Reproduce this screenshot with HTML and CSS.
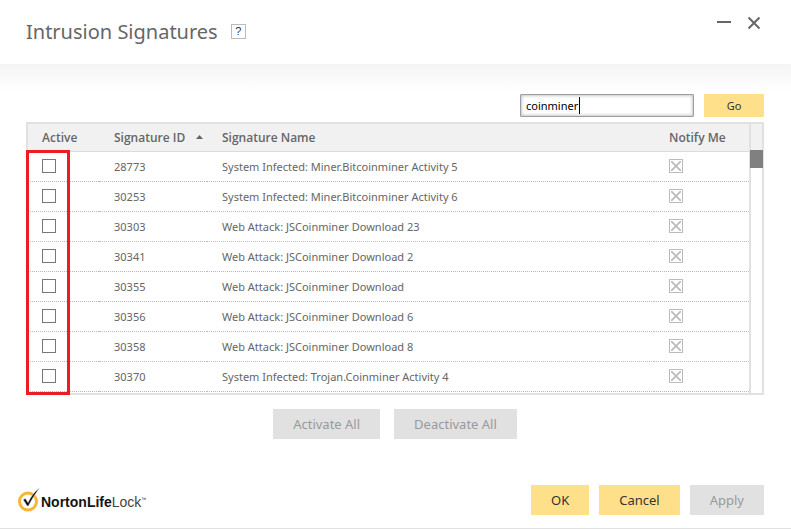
FILE: index.html
```html
<!DOCTYPE html>
<html lang="en">
<head>
<meta charset="utf-8">
<title>Intrusion Signatures</title>
<link rel="stylesheet" href="styles.css">
</head>
<body>
<header class="titlebar">
  <h1 class="title">Intrusion Signatures</h1>
  <button class="help" type="button" aria-label="Help">?</button>
  <div class="window-buttons">
    <button class="window-button" type="button" aria-label="Minimize">
      <svg width="14" height="14" viewBox="0 0 14 14"><path d="M0 6h14" stroke="#666" stroke-width="2"/></svg>
    </button>
    <button class="window-button" type="button" aria-label="Close">
      <svg width="14" height="14" viewBox="0 0 14 14"><path d="M1.5 1.5l11 11M12.500 1.500l-11 11" stroke="#666" stroke-width="2"/></svg>
    </button>
  </div>
</header>
<main class="content">
  <form class="search">
    <div class="search-box">
      <input class="search-input" type="text" value="coinminer" aria-label="Search signatures">
      <span class="caret"></span>
    </div>
    <button class="button button-go" type="button">Go</button>
  </form>
  <div class="list">
    <table class="signatures">
      <colgroup><col class="col-active"><col class="col-id"><col><col class="col-notify"></colgroup>
      <thead>
        <tr><th>Active</th><th>Signature ID<svg class="sort" width="7" height="4" viewBox="0 0 7 4"><path d="M0 4L3.500 0L7 4z" fill="#666"/></svg></th><th>Signature Name</th><th>Notify Me</th></tr>
      </thead>
      <tbody>
        <tr><td><input class="check" type="checkbox" aria-label="Activate 28773"></td><td>28773</td><td>System Infected: Miner.Bitcoinminer Activity 5</td><td><input class="check notify" type="checkbox" checked disabled aria-label="Notify 28773"></td></tr>
        <tr><td><input class="check" type="checkbox" aria-label="Activate 30253"></td><td>30253</td><td>System Infected: Miner.Bitcoinminer Activity 6</td><td><input class="check notify" type="checkbox" checked disabled aria-label="Notify 30253"></td></tr>
        <tr><td><input class="check" type="checkbox" aria-label="Activate 30303"></td><td>30303</td><td>Web Attack: JSCoinminer Download 23</td><td><input class="check notify" type="checkbox" checked disabled aria-label="Notify 30303"></td></tr>
        <tr><td><input class="check" type="checkbox" aria-label="Activate 30341"></td><td>30341</td><td>Web Attack: JSCoinminer Download 2</td><td><input class="check notify" type="checkbox" checked disabled aria-label="Notify 30341"></td></tr>
        <tr><td><input class="check" type="checkbox" aria-label="Activate 30355"></td><td>30355</td><td>Web Attack: JSCoinminer Download</td><td><input class="check notify" type="checkbox" checked disabled aria-label="Notify 30355"></td></tr>
        <tr><td><input class="check" type="checkbox" aria-label="Activate 30356"></td><td>30356</td><td>Web Attack: JSCoinminer Download 6</td><td><input class="check notify" type="checkbox" checked disabled aria-label="Notify 30356"></td></tr>
        <tr><td><input class="check" type="checkbox" aria-label="Activate 30358"></td><td>30358</td><td>Web Attack: JSCoinminer Download 8</td><td><input class="check notify" type="checkbox" checked disabled aria-label="Notify 30358"></td></tr>
        <tr><td><input class="check" type="checkbox" aria-label="Activate 30370"></td><td>30370</td><td>System Infected: Trojan.Coinminer Activity 4</td><td><input class="check notify" type="checkbox" checked disabled aria-label="Notify 30370"></td></tr>
      </tbody>
    </table>
    <div class="scrollbar"><div class="scroll-top"></div><div class="scroll-thumb"></div></div>
    <div class="highlight"></div>
  </div>
  <div class="bulk">
    <button class="button" type="button" disabled>Activate All</button>
    <button class="button" type="button" disabled>Deactivate All</button>
  </div>
</main>
<footer class="footer">
  <div class="brand">
    <svg width="22" height="24" viewBox="0 0 22 24"><circle cx="10" cy="13.500" r="8.500" fill="none" stroke="#f7b538" stroke-width="3"/><path d="M5 11.500l2.500-1l2.500 4C13 8.500 16 4 21.500 0C18 5 14 11 10.500 18H9z" fill="#151515" stroke="#fff" stroke-width=".5"/></svg>
    <span class="brand-name"><b>NortonLife</b><span class="brand-light">Lock</span><small class="mark">™</small></span>
  </div>
  <div class="actions">
    <button class="button" type="button">OK</button>
    <button class="button" type="button">Cancel</button>
    <button class="button" type="button" disabled>Apply</button>
  </div>
</footer>
</body>
</html>
```
FILE: styles.css
```css
* { box-sizing: border-box; }

body {
  margin: 0;
  min-height: 100vh;
  display: flex;
  flex-direction: column;
  background: #fff;
  border-bottom: 1px solid #e1e1e1;
  color: #666;
  font: 11px/16px "Segoe UI", "Noto Sans", sans-serif;
}

.titlebar {
  display: flex;
  height: 64px;
  padding: 0 30px 0 26px;
}

.title {
  margin: 17px 13px 0 0;
  font-size: 20px;
  line-height: 30px;
  font-weight: 400;
}

.help {
  width: 15px;
  height: 15px;
  margin-top: 24px;
  padding: 0;
  border: 1px solid #bbb;
  background: #fff;
  color: #333;
  font: 11px/13px "Liberation Sans", Arial, sans-serif;
}

.window-buttons {
  display: flex;
  gap: 16px;
  margin: 16px 0 0 auto;
}

.window-button {
  width: 14px;
  height: 14px;
  padding: 0;
  border: 0;
  background: none;
}

.window-button svg { display: block; }

.content {
  padding: 30px 27px 0 26px;
  background: linear-gradient(#f5f5f5, #fff 28px);
}

.search {
  display: flex;
  justify-content: flex-end;
  gap: 10px;
  margin-bottom: 5px;
}

.search-box {
  position: relative;
  width: 174px;
}

.search-input {
  display: block;
  width: 100%;
  height: 23px;
  padding: 0 5px;
  border: 1px solid #9b9ea3;
  border-radius: 1px;
  box-shadow: inset 0 0 3px 1px #c5c8ce;
  color: #000;
  font: inherit;
}

.caret {
  position: absolute;
  left: 59px;
  top: 3px;
  width: 1px;
  height: 17px;
  background: #000;
}

.list {
  position: relative;
  display: flex;
  border: 2px solid #e1e1e1;
}

.signatures {
  flex: 1;
  table-layout: fixed;
  border-collapse: separate;
  border-spacing: 0;
  margin-bottom: 1px;
}

.col-active { width: 71px; }
.col-id { width: 108px; }
.col-notify { width: 95px; }

th {
  height: 28px;
  padding: 0 0 0 15px;
  border-bottom: 1px solid #dcdcdc;
  background: #f1f1f1;
  text-align: left;
  font: 600 12px/16px "Segoe UI", "Open Sans", sans-serif;
}

td {
  height: 30px;
  padding: 0 0 0 15px;
  border-bottom: 1px dotted #bbb;
}

th:first-child, td:first-child { padding-left: 14px; }

.sort {
  margin-left: 11px;
  vertical-align: 3px;
}

.check {
  display: block;
  width: 14px;
  height: 14px;
  margin: 0 0 1px;
  appearance: none;
  border: 1px solid #777;
  background: #fff;
}

.notify {
  border-color: #bbb;
  background:
    linear-gradient(45deg, transparent 42%, #bbb 46%, #bbb 54%, transparent 58%) center / 10px 10px no-repeat,
    linear-gradient(-45deg, transparent 42%, #bbb 46%, #bbb 54%, transparent 58%) center / 10px 10px no-repeat;
}

.scrollbar {
  width: 13px;
  border-left: 2px solid #e1e1e1;
}

.scroll-top {
  height: 26px;
  background: #f1f1f1;
}

.scroll-thumb {
  height: 18px;
  margin: 0 -1px;
  background: #808080;
}

.highlight {
  position: absolute;
  left: -2px;
  top: 26px;
  bottom: -2px;
  width: 44px;
  border: 3px solid #ed1c24;
}

.button {
  height: 30px;
  padding: 0 20px;
  border: 0;
  background: #ffe08a;
  color: #333;
  font: 13px/18px "Segoe UI", "Noto Sans", sans-serif;
}

.button:disabled {
  background: #e1e1e1;
  color: #999;
}

.button-go {
  width: 60px;
  height: 23px;
  padding: 0;
  font-size: 11px;
}

.bulk {
  display: flex;
  justify-content: center;
  gap: 14px;
  margin-top: 14px;
}

.footer {
  display: flex;
  justify-content: space-between;
  margin-top: auto;
  padding: 0 27px 13px 18px;
}

.brand {
  display: flex;
  align-items: center;
  color: #151515;
}

.brand-name {
  margin: 3px 0 0 1px;
  font: 14px/18px "Liberation Sans", Arial, sans-serif;
}

.brand-light { color: #444; }

.mark { font-size: 5px; vertical-align: top; line-height: 12px; }

.actions {
  display: flex;
  gap: 10px;
}
```
